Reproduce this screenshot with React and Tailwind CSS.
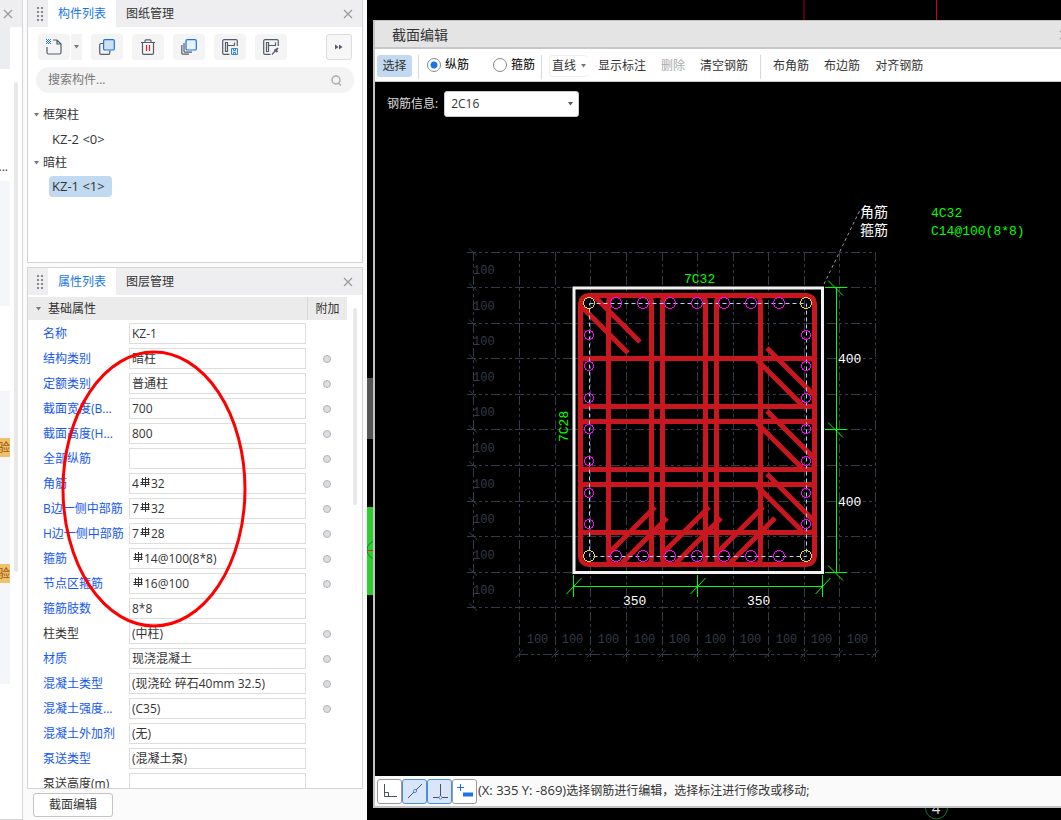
import React from 'react';
import clsx from 'clsx';

// Property rows: plain labels are black, the rest are blue
const PROPS = [
  { label: '名称', value: 'KZ-1' },
  { label: '结构类别', value: '暗柱', dot: true },
  { label: '定额类别', value: '普通柱', dot: true },
  { label: '截面宽度(B...', value: '700', dot: true },
  { label: '截面高度(H...', value: '800', dot: true },
  { label: '全部纵筋', value: '', dot: true },
  { label: '角筋', prefix: '4', rebar: true, value: '32', dot: true },
  { label: 'B边一侧中部筋', prefix: '7', rebar: true, value: '32', dot: true },
  { label: 'H边一侧中部筋', prefix: '7', rebar: true, value: '28', dot: true },
  { label: '箍筋', rebar: true, value: '14@100(8*8)', dot: true },
  { label: '节点区箍筋', rebar: true, value: '16@100', dot: true },
  { label: '箍筋肢数', value: '8*8' },
  { label: '柱类型', value: '(中柱)', dot: true, plain: true },
  { label: '材质', value: '现浇混凝土', dot: true },
  { label: '混凝土类型', value: '(现浇砼 碎石40mm 32.5)', dot: true },
  { label: '混凝土强度...', value: '(C35)', dot: true },
  { label: '混凝土外加剂', value: '(无)' },
  { label: '泵送类型', value: '(混凝土泵)' },
  { label: '泵送高度(m)', value: '', plain: true },
];

const GRID_X = [519.5, 555.5, 590.5, 626.5, 662.5, 697.5, 733.5, 768.5, 804.5, 839.5, 875.5];
const GRID_Y = [252.5, 287.5, 323.5, 358.5, 394.5, 429.5, 465.5, 501.5, 536.5, 572.5, 607.5];
const BAR_X = [616, 643, 670, 697, 724, 751, 779];
const BAR_Y = [335, 366, 398, 429, 461, 493, 524];

const CloseIcon = ({ className }) => (
  <svg className={className} width="10" height="10" viewBox="0 0 10 10" fill="none" stroke="#999" strokeWidth="1.2">
    <path d="M1 1l8 8M9 1l-8 8" />
  </svg>
);

const Caret = ({ color = '#777' }) => (
  <svg width="5" height="4" viewBox="0 0 5 4" className="shrink-0">
    <path d="M0 0h5L2.5 3.5z" fill={color} />
  </svg>
);

const Grip = () => (
  <svg width="6" height="14" viewBox="0 0 6 14" fill="#888">
    {[0, 4, 8, 12].map((y) => (
      <React.Fragment key={y}>
        <rect x="0" y={y} width="2" height="2" />
        <rect x="4" y={y} width="2" height="2" />
      </React.Fragment>
    ))}
  </svg>
);

const RebarSign = () => (
  <svg width="12" height="12" viewBox="0 0 12 12" fill="none" stroke="#333" strokeWidth="1" className="mb-1 shrink-0">
    <path d="M6.5 1v10M2.5 3.5h8M1.500 6.500h9M3.500 2v6M9.500 2v6M1.500 8.500h9" />
  </svg>
);

const TabBar = ({ active, other }) => (
  <div className="flex h-[27px] shrink-0 items-stretch bg-[#eeeef0]">
    <div className="flex w-5 items-center justify-center pl-1">
      <Grip />
    </div>
    <button className="w-[68px] bg-white text-[#1677e8]">{active}</button>
    <button className="w-[68px]">{other}</button>
    <button aria-label="关闭" className="ml-auto mr-[5px] px-1">
      <CloseIcon />
    </button>
  </div>
);

const ToolButton = ({ label, children }) => (
  <button aria-label={label} className="flex h-[26px] w-8 items-center justify-center rounded-sm bg-[#f4f4f4]">
    {children}
  </button>
);

const ComponentPanel = () => (
  <section className="flex h-[263px] shrink-0 flex-col border border-t-0 border-[#d4d4d4] bg-white">
    <TabBar active="构件列表" other="图纸管理" />
    <div className="flex gap-[9px] pt-[7px] pr-[10px] pl-[10px]">
      <div className="flex h-[26px]">
        <ToolButton label="新建">
          <svg width="16" height="16" viewBox="0 0 16 16" fill="none" stroke="#555c6e" strokeWidth="1.2">
            <path d="M1 8v5.5a1.5 1.5 0 001.5 1.5h11a1.5 1.5 0 001.5-1.5V5l-4-4H7M11 1v4h4" />
            <path d="M0 .5h5M0 2.500h5M0 4.500h5" stroke="#2a7fe0" strokeWidth="1" strokeDasharray="1 1" />
            <path d="M1 1.500h4M1 3.500h4" stroke="#2a7fe0" strokeWidth="1" strokeDasharray="1 1" />
          </svg>
        </ToolButton>
        <button aria-label="新建选项" className="flex w-3 items-center justify-center border-l border-white bg-[#f4f4f4]">
          <Caret />
        </button>
      </div>
      <ToolButton label="复制">
        <svg width="16" height="16" viewBox="0 0 16 16" strokeWidth="1.2">
          <path d="M4.500 4.500H2a1.300 1.300 0 00-1.300 1.300V14A1.300 1.300 0 002 15.300h7.500a1.300 1.300 0 001.300-1.300v-2.500" fill="none" stroke="#555c6e" />
          <rect x="4.600" y=".7" width="10.700" height="10.300" rx="1.300" fill="#cfe0f5" stroke="#1b74e4" />
        </svg>
      </ToolButton>
      <ToolButton label="删除">
        <svg width="16" height="16" viewBox="0 0 16 16" fill="none" stroke="#555c6e" strokeWidth="1.200">
          <path d="M1 3.500h14M5 3.500V1.800A1 1 0 016 .8h4a1 1 0 011 1v1.700M2.500 3.500V14A1.300 1.300 0 003.800 15.300h8.400a1.300 1.300 0 001.300-1.300V3.500" />
          <path d="M6.500 6v6M9.500 6v6" stroke="#e02828" />
        </svg>
      </ToolButton>
      <ToolButton label="层间复制">
        <svg width="16" height="16" viewBox="0 0 16 16" fill="none" stroke="#555c6e" strokeWidth="1.200">
          <path d="M.8 6v8.200a1 1 0 001 1H8M3 4v8a1.200 1.200 0 001.200 1.200H11" />
          <rect x="5" y=".7" width="10.300" height="10.300" rx="1.300" fill="#e8f2fe" stroke="#1b74e4" />
        </svg>
      </ToolButton>
      <ToolButton label="存档">
        <svg width="16" height="16" viewBox="0 0 16 16" fill="none" stroke="#555c6e" strokeWidth="1.200">
          <path d="M7.500 15.300H2A1.300 1.300 0 01.7 14V2A1.300 1.300 0 012 .7h12A1.300 1.300 0 0115.300 2v5M3.500 12.500v-9h2v9zM5.500 6.500h7v-3" />
          <path d="M9.500 9.500h6v6h-6z" fill="#d9e8fa" stroke="#3a86dc" strokeWidth="1" />
          <path d="M11.500 9.500v2h2v-2M11.500 15v-1.500h2V15" stroke="#3a86dc" strokeWidth="1" />
        </svg>
      </ToolButton>
      <ToolButton label="提取">
        <svg width="16" height="16" viewBox="0 0 16 16" fill="none" stroke="#555c6e" strokeWidth="1.200">
          <path d="M7.500 15.300H2A1.300 1.300 0 01.7 14V2A1.300 1.300 0 012 .7h12A1.300 1.300 0 0115.300 2v5M3.500 12.500v-9h2v9zM5.500 6.500h7v-3" />
          <path d="M9 15.500l3.500-4" />
          <path d="M11.500 10.500l3 2.500M12.800 11.500l2-2.500" strokeWidth="2" />
        </svg>
      </ToolButton>
      <button aria-label="更多" className="ml-auto flex size-[26px] items-center justify-center rounded-[3px] border border-[#ddd] bg-[#f7f7f7]">
        <svg width="8" height="6" viewBox="0 0 8 6" fill="#555c6e">
          <path d="M0 .5L3.500 3 0 5.500zM4 .5L7.500 3 4 5.500z" />
        </svg>
      </button>
    </div>
    <div className="mx-2 mt-[7px] flex h-[26px] shrink-0 items-center rounded-full bg-[#f3f3f3] pr-3 pl-3">
      <input aria-label="搜索构件" placeholder="搜索构件..." className="min-w-0 flex-1 bg-transparent outline-none placeholder:text-[#777]" />
      <svg width="11" height="11" viewBox="0 0 11 11" fill="none" stroke="#aaa" strokeWidth="1.400">
        <circle cx="5" cy="5" r="4" />
        <path d="M7.500 8l2.500 2.500" />
      </svg>
    </div>
    <ul className="mt-[10px] leading-6">
      <li>
        <div className="flex items-center gap-1 pl-[6px]">
          <Caret />框架柱
        </div>
        <button className="ml-[21px] flex h-6 items-center pb-px">
          <span className="px-[3px] text-[13px] leading-5">KZ-2 &lt;0&gt;</span>
        </button>
      </li>
      <li>
        <div className="flex items-center gap-1 pl-[6px]">
          <Caret />暗柱
        </div>
        <button className="ml-[21px] flex h-6 items-center pb-px">
          <span className="w-[63px] rounded-sm bg-[#c1d9f1] px-[3px] text-left text-[13px] leading-[21px]">KZ-1 &lt;1&gt;</span>
        </button>
      </li>
    </ul>
  </section>
);

const PropRow = ({ row, id }) => (
  <div className="flex h-[25px] items-center">
    <label htmlFor={id} className={clsx('w-[101px] shrink-0 pl-[15px] whitespace-nowrap', !row.plain && 'text-[#1457f5]')}>
      {row.label}
    </label>
    <div className="flex h-[21px] min-w-0 flex-1 items-center border border-[#ddd] pl-[2px]">
      {row.prefix && <span>{row.prefix}</span>}
      {row.rebar && <RebarSign />}
      <input id={id} defaultValue={row.value} className="w-full min-w-0 bg-transparent outline-none" />
    </div>
    <div className="flex w-[41px] justify-center">
      {row.dot && <span className="size-2 rounded-full border border-[#b5b5b8] bg-[#dcdde0]" />}
    </div>
  </div>
);

const PropertyPanel = () => (
  <section className="mt-1 flex min-h-0 flex-1 flex-col border border-[#d4d4d4] bg-white">
    <TabBar active="属性列表" other="图层管理" />
    <div className="mt-[2px] flex min-h-0 flex-1">
      <div className="flex min-w-0 flex-1 flex-col overflow-hidden">
        <div className="flex h-[23px] shrink-0 items-center bg-[#ebebeb]">
          <button className="flex flex-1 items-center gap-[7px] pl-2">
            <Caret />基础属性
          </button>
          <span className="w-10 border-l border-[#d8d8d8] text-center leading-[23px]">附加</span>
        </div>
        <div className="min-h-0 flex-1 overflow-hidden pt-px">
          {PROPS.map((row, i) => (
            <PropRow key={row.label} row={row} id={`prop-${i}`} />
          ))}
        </div>
      </div>
      <div className="flex w-[15px] shrink-0 justify-center pt-[11px]">
        <div className="h-[197px] w-1 rounded-full bg-[#e8e8e8]" />
      </div>
    </div>
  </section>
);

// Narrow leftover of the navigation dock on the far left
const LeftDock = () => (
  <aside className="mr-1 flex w-[23px] shrink-0 flex-col overflow-hidden border-r border-b border-[#d4d4d4] bg-white">
    <div className="flex h-[27px] shrink-0 items-center bg-[#eeeef0] pl-[3px]">
      <button aria-label="关闭">
        <CloseIcon />
      </button>
    </div>
    <div className="flex">
      <div className="w-[10px] shrink-0 overflow-hidden">
        <div className="h-[42px] bg-[#ebedf1]" />
        <div className="flex h-28 items-end justify-end pr-[2px] pb-2 leading-3">...</div>
        <div className="h-[125px] bg-[#f5f6f9]" />
        <div className="mt-[85px] flex h-[293px] flex-col gap-[107px] bg-[#f5f6f9] pt-[47px]">
          <span className="flex h-[19px] w-[10px] items-center justify-end overflow-hidden bg-[#efc16c] text-[#a0540a]">验</span>
          <span className="flex h-[19px] w-[10px] items-center justify-end overflow-hidden bg-[#efc16c] text-[#a0540a]">验</span>
        </div>
      </div>
      <div className="mt-[55px] ml-1 h-[490px] w-1 rounded-full bg-[#e8e8e8]" />
    </div>
  </aside>
);

// Column cross-section with its stirrups, bars and dimensions
const SectionDrawing = () => (
  <svg width="686" height="650" viewBox="375 126 686 650" fill="none" className="shrink-0 font-['Liberation_Mono','Noto_Sans_CJK_SC',monospace]">
    <g stroke="#343b48" strokeDasharray="9 3 3 3 3 3">
      {GRID_Y.map((y) => (
        <path key={y} d={`M467 ${y}H876`} />
      ))}
      {GRID_X.map((x) => (
        <path key={x} d={`M${x} 252V661`} />
      ))}
      <path d="M473.500 252V608M519 654.500H876" />
    </g>
    <g stroke="#343b48">
      {GRID_Y.map((y) => (
        <path key={y} d={`M469 ${y - 4}l8 7`} />
      ))}
      {GRID_X.map((x) => (
        <path key={x} d={`M${x - 4} 658l7 -8`} />
      ))}
    </g>
    <g fill="#343b48" fontSize="12">
      {GRID_Y.slice(1).map((y) => (
        <text key={y} x="473" y={y - 14}>100</text>
      ))}
      {GRID_X.slice(1).map((x) => (
        <text key={x} x={x - 18} y="643" textAnchor="middle">100</text>
      ))}
    </g>

    <rect x="574" y="288" width="248.500" height="284.500" stroke="#f2f2f2" strokeWidth="3" />

    <g stroke="#c8171e" strokeWidth="5">
      <rect x="580.500" y="295.500" width="234" height="269" rx="8" />
      {[[608.5, 43], [662.5, 43], [716.5, 44]].map(([x, w]) => (
        <rect key={x} x={x} y="295.500" width={w} height="269" rx="6" />
      ))}
      {[358.5, 421.5, 484.5].map((y) => (
        <rect key={y} x="580.500" y={y} width="234" height="48" rx="4" />
      ))}
      <path d="M582 307l46 46M595 297l45 45" />
      {[0, 63, 126].map((d) => (
        <path key={d} d={`M767 ${348 + d}l47 47M757 ${360 + d}l45 45`} />
      ))}
      {[0, 54, 108].map((d) => (
        <path key={d} d={`M${655 + d} 507l-45 45M${667 + d} 518l-45 45`} />
      ))}
    </g>

    <rect x="589.500" y="303.500" width="217" height="253" stroke="#b5d3f5" strokeDasharray="4 3" />
    <g stroke="#f0dc3c" shapeRendering="crispEdges">
      {[[589, 303], [806, 303], [589, 556], [806, 556]].map(([x, y]) => (
        <circle key={`${x}-${y}`} cx={x} cy={y} r="5.500" />
      ))}
    </g>
    <g stroke="#f0f" shapeRendering="crispEdges">
      {BAR_X.map((x) => (
        <React.Fragment key={x}>
          <circle cx={x} cy="303" r="5.500" />
          <circle cx={x} cy="556" r="5.500" />
        </React.Fragment>
      ))}
      {BAR_Y.map((y) => (
        <React.Fragment key={y}>
          <circle cx="589" cy={y} r="4.500" />
          <circle cx="806" cy={y} r="4.500" />
        </React.Fragment>
      ))}
    </g>

    <g stroke="#0f0">
      <path d="M836.500 287V573M573 586.500H823" />
      {[287.5, 429.5, 572.5].map((y) => (
        <path key={y} d={`M825 ${y}h22M828 ${y - 7}l15 15`} />
      ))}
      {[573.5, 697.5, 822.5].map((x) => (
        <path key={x} d={`M${x} 575v22M${x - 7} 594l15 -16`} />
      ))}
    </g>
    <path d="M824 284L860 210" stroke="#999" strokeDasharray="3 3" />

    <g fontSize="13" fill="#0f0">
      <text x="684" y="283">7C32</text>
      <text transform="translate(568 442) rotate(-90)">7C28</text>
      <text x="931" y="217">4C32</text>
      <text x="931" y="235">C14@100(8*8)</text>
    </g>
    <g fontSize="13" fill="#fff">
      <text x="838" y="363">400</text>
      <text x="838" y="506">400</text>
      <text x="623" y="605">350</text>
      <text x="747" y="605">350</text>
    </g>
    <g fontSize="14" fill="#fff">
      <text x="860" y="217">角筋</text>
      <text x="860" y="235">箍筋</text>
    </g>
  </svg>
);

const Radio = ({ label, checked }) => (
  <label className="flex items-center gap-1 text-black">
    <input
      type="radio"
      name="rebar-kind"
      defaultChecked={checked}
      className="size-[14px] appearance-none rounded-full border border-[#888] bg-white checked:bg-[radial-gradient(circle,#1b74e4_3px,white_4px)]"
    />
    {label}
  </label>
);

const Divider = () => <span className="mt-1 h-6 w-px self-start bg-[#d8d8d8]" />;

const SnapButton = ({ label, active, children }) => (
  <button
    aria-label={label}
    className={clsx(
      'flex size-[25px] items-center justify-center rounded-[3px] border',
      active ? 'border-[#4a8fe0] bg-[#d9e6fa]' : 'border-[#999] bg-white'
    )}
  >
    <svg width="18" height="18" viewBox="0 0 18 18" fill="none" stroke="#4a5062">
      {children}
    </svg>
  </button>
);

const SectionDialog = () => (
  <section className="relative flex min-w-0 flex-1 flex-col border-y border-l-2 border-b-2 border-[#c2c3c6] bg-black">
    <header className="flex h-7 shrink-0 items-center overflow-hidden border-b-2 border-[#c8c8cb] bg-[#e4e4e4] pt-px pl-[17px] text-sm">
      <h1>截面编辑</h1>
      <button aria-label="关闭" className="-mr-2 ml-auto">
        <CloseIcon />
      </button>
    </header>
    <div className="flex h-[33px] shrink-0 items-center overflow-hidden border-b border-[#c8c8cb] bg-white pt-[2px] pl-[2px] whitespace-nowrap">
      <button className="h-[22px] w-[35px] rounded-[3px] bg-[#c1d9f1]">选择</button>
      <div className="ml-[6px] flex items-center self-stretch pb-[2px]">
        <Divider />
        <div className="ml-2 flex gap-6">
          <Radio label="纵筋" checked />
          <Radio label="箍筋" />
        </div>
        <span className="w-[6px]" />
        <Divider />
      </div>
      <button className="ml-[7px] flex h-[22px] items-center gap-[5px] rounded-sm border border-r-0 border-[#eee] px-[2px]">
        直线
        <Caret />
      </button>
      <div className="ml-[10px] flex gap-[15px]">
        <button>显示标注</button>
        <button className="text-[#aaa]">删除</button>
        <button>清空钢筋</button>
      </div>
      <div className="ml-3 flex self-stretch">
        <Divider />
      </div>
      <div className="ml-3 flex gap-[15px]">
        <button>布角筋</button>
        <button>布边筋</button>
        <button>对齐钢筋</button>
      </div>
    </div>
    <div className="flex h-[44px] shrink-0 items-center gap-[6px] pl-3">
      <label htmlFor="rebar-info" className="text-[#ddd]">钢筋信息:</label>
      <div className="grid items-center">
        <select id="rebar-info" className="col-start-1 row-start-1 h-[26px] w-[135px] appearance-none rounded-[3px] border border-[#ccc] bg-white pl-[6px]">
          <option>2C16</option>
        </select>
        <span className="pointer-events-none col-start-1 row-start-1 mr-[6px] justify-self-end">
          <Caret color="#555" />
        </span>
      </div>
    </div>
    <div className="flex min-h-0 flex-1 overflow-hidden">
      <SectionDrawing />
    </div>
    <footer className="flex h-[30px] shrink-0 items-center overflow-hidden bg-[#fafafa] pl-[2px] whitespace-nowrap">
      <SnapButton label="正交">
        <path d="M3.500 2v12.500H16M3.500 10.500h4v4" />
      </SnapButton>
      <SnapButton label="中点" active>
        <path d="M2 16L16 2" />
        <circle cx="9" cy="9" r="1.500" stroke="#3a86dc" fill="#fff" />
      </SnapButton>
      <SnapButton label="垂足" active>
        <path d="M9.500 2v12M2 15.500h15" />
        <circle cx="9.500" cy="15.500" r="1.500" stroke="#3a86dc" fill="#fff" />
      </SnapButton>
      <SnapButton label="动态输入">
        <path d="M4.500 2v7M1 5.500h7" stroke="#1b74e4" />
        <path d="M7 10.500h10v4H7z" fill="#1b74e4" stroke="none" />
      </SnapButton>
      <p className="pl-px">
        <span className="text-[13px]">(X: 335 Y: -869)</span>选择钢筋进行编辑，选择标注进行修改或移动;
      </p>
    </footer>
  </section>
);

export default function App() {
  return (
    <div className="relative flex h-screen overflow-hidden bg-[#fbfbfb] font-['Open_Sans','Noto_Sans_CJK_SC',sans-serif] text-xs text-[#333]">
      <LeftDock />
      <main className="mr-1 flex w-[336px] shrink-0 flex-col">
        <ComponentPanel />
        <PropertyPanel />
        <div className="flex h-[31px] shrink-0 items-start pt-1 pl-[6px]">
          <button className="h-6 w-20 rounded-[3px] border border-[#c4c4c4] bg-white">截面编辑</button>
        </div>
      </main>
      <div className="relative flex min-w-0 flex-1 bg-black pt-5 pb-3 pl-[6px]">
        {/* main model view showing around the dialog */}
        <svg className="absolute top-0 left-0" width="694" height="820" viewBox="367 0 694 820" fill="none">
          <path d="M804 0v20" stroke="#500" strokeWidth="2" />
          <path d="M936.500 0v20" stroke="#d00" />
          <rect x="367" y="378" width="8" height="61" fill="#555" />
          <rect x="367" y="507" width="8" height="88" fill="#2fce2f" />
          <circle cx="376" cy="550" r="9" stroke="#084" />
          <path d="M367 550.500h8" stroke="#d22" />
          <circle cx="936.500" cy="808" r="11" stroke="#0a7a2a" />
          <text x="936" y="814" textAnchor="middle" fontSize="15" fill="#ddd">4</text>
        </svg>
        <SectionDialog />
      </div>
      {/* hand-drawn mark over the rebar fields */}
      <svg className="pointer-events-none absolute top-0 left-0" width="367" height="820" viewBox="0 0 367 820" fill="none">
        <ellipse cx="154" cy="489" rx="91" ry="137" stroke="#f00" strokeWidth="3" />
      </svg>
    </div>
  );
}
